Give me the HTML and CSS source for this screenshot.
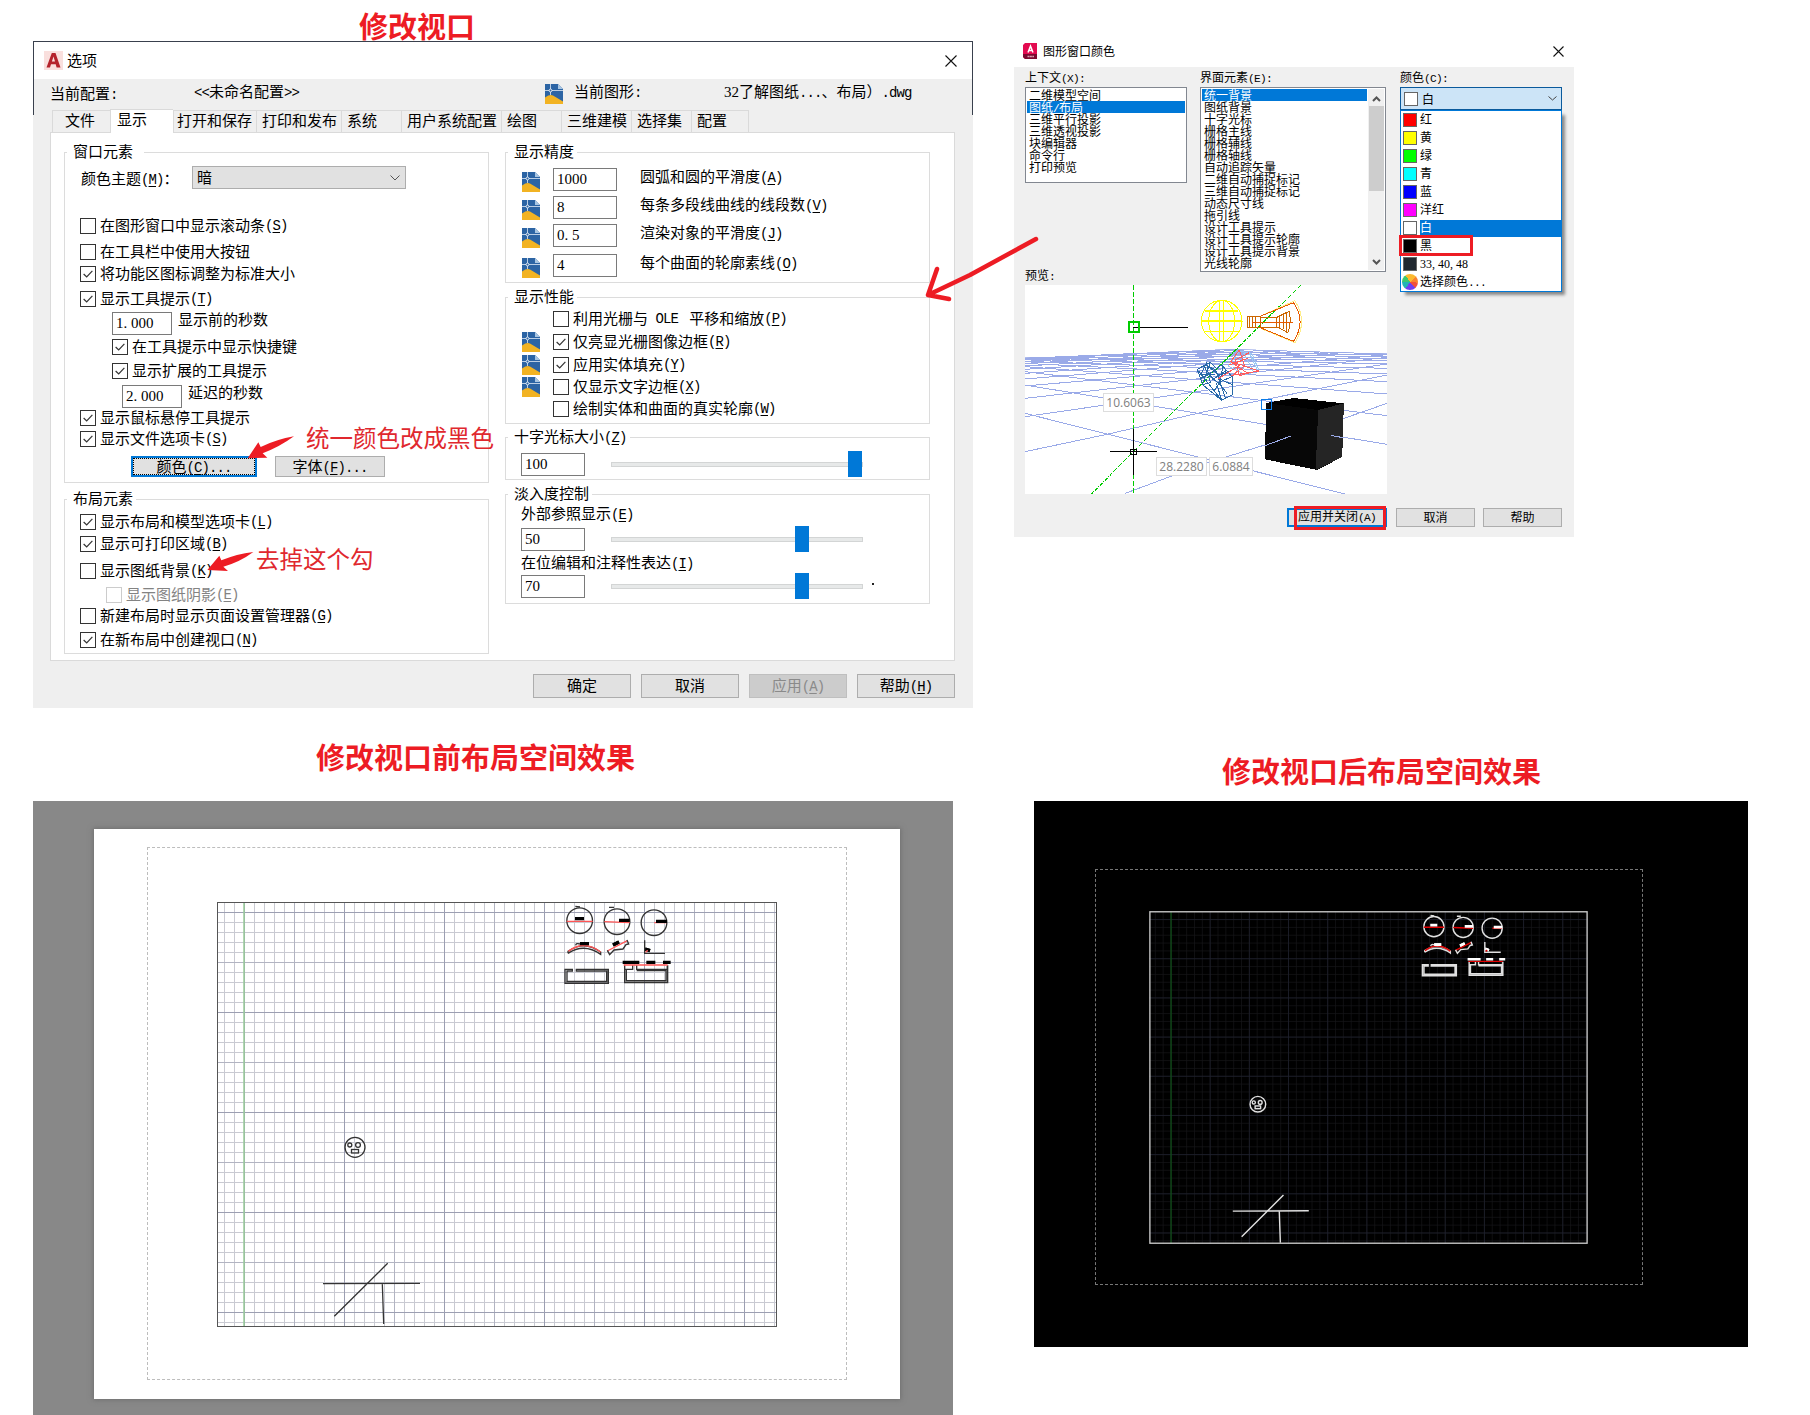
FILE: index.html
```html
<!DOCTYPE html>
<html lang="zh-CN">
<head>
<meta charset="utf-8">
<title>修改视口</title>
<link rel="stylesheet" href="styles.css">
</head>
<body>
<svg class="defs" width="0" height="0">
  <symbol id="dwg" viewBox="0 0 18 20">
    <path d="M0 0H13L18 5V20H0Z" fill="#2c64a4"/>
    <path d="M13 0L18 5H13Z" fill="#a9c6e2"/>
    <path d="M0 13.500Q5 10 8 11.500L18 17.500V20H0Z" fill="#f2b323"/>
    <path d="M5.500 0V11M0 6.500H18" stroke="#dfeaf5" stroke-width=".8" fill="none"/>
    <circle cx="5.500" cy="6.500" r="1.400" fill="#2c64a4" stroke="#fff" stroke-width=".8"/>
  </symbol>
  <symbol id="tick" viewBox="0 0 16 16"><path d="M3 8L6.500 11.300L13 4.500" fill="none" stroke="#333" stroke-width="1.400"/></symbol>
  <symbol id="drawing" viewBox="0 0 560 425">
    <g class="thick" transform="translate(323 -12) scale(.33333)" fill="none" stroke="currentColor">
      <circle cx="119" cy="92" r="38.500"/><circle cx="231" cy="95" r="38.500"/><circle cx="342" cy="98" r="38.500"/>
      <path d="M80 94H158M193 95L269 98M343 98H380" stroke="var(--red)"/>
      <g class="ink"><path d="M105 86H132M237 91H269M348 94H381M120 161H147M219 165L237 156M315 177L330 182"/></g>
      <path d="M106 49L120 51M207 52H222"/>
      <path d="M84 190V184Q132 150 182 186V193Q132 158 84 190M107 166Q108 158 120 162"/>
      <path d="M85 184Q132 148 182 186M202 183L262 152" stroke="var(--red)"/>
      <g class="ink"><path d="M120 161H147M219 165L237 156M315 177L330 182"/></g>
      <path d="M202 181L209 194L222 180L249 177L258 164L266 162L261 150M314 151V190H375"/>
      <path d="M317 187L323 181" stroke="var(--red)"/>
      <path d="M97 238H75V280H205V238H109V243H200V274H81V243H97Z"/>
      <path d="M78 277H203V240" stroke-width="5" opacity=".5"/>
      <path d="M254 226V278H383V226M259 240V272H378V240M254 238H278V226M290 226V238H383M290 242H378"/>
      <path d="M256 275H381V228" stroke-width="5" opacity=".5"/>
      <path d="M251 225H383" stroke="var(--red)"/>
      <g class="ink"><path d="M248 217H298M319 217H346M369 217H392"/></g>
    </g>
    <g class="lines" fill="none" stroke="currentColor">
      <circle cx="138" cy="245.300" r="10"/><circle cx="132.800" cy="243" r="2"/><circle cx="141" cy="243" r="2.400"/><rect x="134.500" y="247.500" width="7" height="3.500"/>
      <path d="M106 381.700L203 381.300M170.700 361.300L117.300 414.300M165.300 381.300L166.700 422"/>
    </g>
  </symbol>
</svg>

<main class="board">
  <h1 class="note-title t1">修改视口</h1>
  <h2 class="note-title t2">修改视口前布局空间效果</h2>
  <h2 class="note-title t3">修改视口后布局空间效果</h2>

  <section class="options">
    <header class="titlebar">
      <svg class="app" width="19" height="19" viewBox="0 0 19 19"><rect width="19" height="19" fill="#f9dfdd"/><path d="M2.500 16.500L7.800 2H11.500L16.500 16.500H12.600L11.700 13.300H7L6 16.500ZM7.900 10.500H11L9.500 5.500Z" fill="#b5232c" fill-rule="evenodd"/></svg>
      <span>选项</span>
      <svg class="x" width="12" height="12" viewBox="0 0 12 12"><path d="M.5 .5L11.500 11.500M11.500 .5L.5 11.500" stroke="#111" stroke-width="1.100"/></svg>
    </header>
    <div class="profile">
      <span class="low">当前配置<span class="k">:</span></span>
      <span><span class="k">&lt;&lt;</span>未命名配置<span class="k">&gt;&gt;</span></span>
      <svg width="18" height="20"><use href="#dwg"/></svg>
      <span>当前图形<span class="k">:</span></span>
      <span>32了解图纸<span class="k">...</span>、布局）<span class="k">.dwg</span></span>
    </div>
    <nav class="tabs">
      <span>文件</span><span class="on">显示</span><span>打开和保存</span><span>打印和发布</span><span>系统</span><span>用户系统配置</span><span>绘图</span><span>三维建模</span><span>选择集</span><span>配置</span>
    </nav>
    <div class="panel">
      <div class="col">
        <div class="group g-window">
          <div class="legend wide">窗口元素</div>
          <div class="rows">
            <div class="theme"><span>颜色主题<span class="k">(<u>M</u>)</span>：</span><div class="select">暗<svg width="10" height="6" viewBox="0 0 10 6"><path d="M.5 .5L5 5L9.500 .5" fill="none" stroke="#555"/></svg></div></div>
            <label class="cb"><i></i>在图形窗口中显示滚动条<span class="k">(<u>S</u>)</span></label>
            <label class="cb"><i></i>在工具栏中使用大按钮</label>
            <label class="cb"><i><svg><use href="#tick"/></svg></i>将功能区图标调整为标准大小</label>
            <label class="cb"><i><svg><use href="#tick"/></svg></i>显示工具提示<span class="k">(<u>T</u>)</span></label>
            <div class="time in1"><b class="input">1<span class="dot">.</span>000</b><span>显示前的秒数</span></div>
            <label class="cb in1"><i><svg><use href="#tick"/></svg></i>在工具提示中显示快捷键</label>
            <label class="cb in1"><i><svg><use href="#tick"/></svg></i>显示扩展的工具提示</label>
            <div class="time in2"><b class="input">2<span class="dot">.</span>000</b><span>延迟的秒数</span></div>
            <label class="cb"><i><svg><use href="#tick"/></svg></i>显示鼠标悬停工具提示</label>
            <label class="cb"><i><svg><use href="#tick"/></svg></i>显示文件选项卡<span class="k">(<u>S</u>)</span></label>
            <div class="pair"><button class="btn focus">颜色<span class="k">(<u>C</u>)...</span></button><button class="btn">字体<span class="k">(<u>F</u>)...</span></button></div>
          </div>
        </div>
        <div class="group g-layout">
          <div class="legend">布局元素</div>
          <div class="rows">
            <label class="cb"><i><svg><use href="#tick"/></svg></i>显示布局和模型选项卡<span class="k">(<u>L</u>)</span></label>
            <label class="cb"><i><svg><use href="#tick"/></svg></i>显示可打印区域<span class="k">(<u>B</u>)</span></label>
            <label class="cb"><i></i>显示图纸背景<span class="k">(<u>K</u>)</span></label>
            <label class="cb off"><i></i>显示图纸阴影<span class="k">(<u>E</u>)</span></label>
            <label class="cb"><i></i>新建布局时显示页面设置管理器<span class="k">(<u>G</u>)</span></label>
            <label class="cb"><i><svg><use href="#tick"/></svg></i>在新布局中创建视口<span class="k">(<u>N</u>)</span></label>
          </div>
        </div>
      </div>
      <div class="col">
        <div class="group g-precision">
          <div class="legend">显示精度</div>
          <div class="rows">
            <div class="prec"><svg width="18" height="20"><use href="#dwg"/></svg><b class="input">1000</b><span>圆弧和圆的平滑度<span class="k">(<u>A</u>)</span></span></div>
            <div class="prec"><svg width="18" height="20"><use href="#dwg"/></svg><b class="input">8</b><span>每条多段线曲线的线段数<span class="k">(<u>V</u>)</span></span></div>
            <div class="prec"><svg width="18" height="20"><use href="#dwg"/></svg><b class="input">0<span class="dot">.</span>5</b><span>渲染对象的平滑度<span class="k">(<u>J</u>)</span></span></div>
            <div class="prec"><svg width="18" height="20"><use href="#dwg"/></svg><b class="input">4</b><span>每个曲面的轮廓素线<span class="k">(<u>O</u>)</span></span></div>
          </div>
        </div>
        <div class="group g-perf">
          <div class="legend">显示性能</div>
          <div class="rows">
            <label class="cb"><em></em><i></i>利用光栅与<span class="k">&nbsp;OLE&nbsp;</span>&nbsp;平移和缩放<span class="k">(<u>P</u>)</span></label>
            <label class="cb"><em><svg width="18" height="20"><use href="#dwg"/></svg></em><i><svg><use href="#tick"/></svg></i>仅亮显光栅图像边框<span class="k">(<u>R</u>)</span></label>
            <label class="cb"><em><svg width="18" height="20"><use href="#dwg"/></svg></em><i><svg><use href="#tick"/></svg></i>应用实体填充<span class="k">(<u>Y</u>)</span></label>
            <label class="cb"><em><svg width="18" height="20"><use href="#dwg"/></svg></em><i></i>仅显示文字边框<span class="k">(<u>X</u>)</span></label>
            <label class="cb"><em></em><i></i>绘制实体和曲面的真实轮廓<span class="k">(<u>W</u>)</span></label>
          </div>
        </div>
        <div class="group g-cross">
          <div class="legend">十字光标大小<span class="k">(<u>Z</u>)</span></div>
          <div class="slide"><b class="input">100</b><div class="track"><i class="full"></i></div></div>
        </div>
        <div class="group g-fade">
          <div class="legend">淡入度控制</div>
          <div class="rows">
            <span class="cap">外部参照显示<span class="k">(<u>E</u>)</span></span>
            <div class="slide"><b class="input">50</b><div class="track"><i></i></div></div>
            <span class="cap">在位编辑和注释性表达<span class="k">(<u>I</u>)</span></span>
            <div class="slide"><b class="input">70</b><div class="track"><i></i></div><s></s></div>
          </div>
        </div>
      </div>
    </div>
    <footer class="foot"><button class="btn">确定</button><button class="btn">取消</button><button class="btn dis">应用<span class="k">(<u>A</u>)</span></button><button class="btn">帮助<span class="k">(<u>H</u>)</span></button></footer>
  </section>

  <section class="colors">
    <header class="titlebar">
      <svg class="app" width="15" height="16" viewBox="0 0 15 16"><path d="M0 2L2 0H14V16H2L0 14Z" fill="#e30b50"/><path d="M0 11H14V16H2L0 14Z" fill="#7d0a30"/><path d="M5 9.500L7.500 3L10 9.500M6 7.500H9" stroke="#fff" stroke-width="1.500" fill="none"/><path d="M4.500 13.500H11" stroke="#d9a0b2" stroke-width="1.500" stroke-dasharray="2 .4"/></svg>
      <span>图形窗口颜色</span>
      <svg class="x" width="11" height="11" viewBox="0 0 11 11"><path d="M.5 .5L10.500 10.500M10.500 .5L.5 10.500" stroke="#111" stroke-width="1.100"/></svg>
    </header>
    <div class="top">
      <div class="field">
        <span class="lab">上下文<span class="k">(X):</span></span>
        <ul class="list ctx"><li>二维模型空间</li><li class="sel">图纸<span class="k">/</span>布局</li><li>三维平行投影</li><li>三维透视投影</li><li>块编辑器</li><li>命令行</li><li>打印预览</li></ul>
        <span class="lab prev">预览<span class="k">:</span></span>
      </div>
      <div class="field">
        <span class="lab">界面元素<span class="k">(E):</span></span>
        <div class="list elem">
          <ul><li class="sel">统一背景</li><li>图纸背景</li><li>十字光标</li><li>栅格主线</li><li>栅格辅线</li><li>栅格轴线</li><li>自动追踪矢量</li><li>二维自动捕捉标记</li><li>三维自动捕捉标记</li><li>动态尺寸线</li><li>拖引线</li><li>设计工具提示</li><li>设计工具提示轮廓</li><li>设计工具提示背景</li><li>光线轮廓</li></ul>
          <div class="bar"><svg width="9" height="6" viewBox="0 0 9 6"><path d="M1 5L4.500 1.500L8 5" fill="none" stroke="#555" stroke-width="2"/></svg><i></i><svg class="dn" width="9" height="6" viewBox="0 0 9 6"><path d="M1 1L4.500 4.500L8 1" fill="none" stroke="#555" stroke-width="2"/></svg></div>
        </div>
      </div>
      <div class="field">
        <span class="lab">颜色<span class="k">(C):</span></span>
        <div class="combo"><i class="sw white"></i><span>白</span><svg width="9" height="5" viewBox="0 0 9 5"><path d="M.5 .5L4.500 4L8.500 .5" fill="none" stroke="#444"/></svg></div>
        <ul class="drop">
          <li><i class="sw red"></i><span>红</span></li><li><i class="sw yellow"></i><span>黄</span></li><li><i class="sw green"></i><span>绿</span></li><li><i class="sw cyan"></i><span>青</span></li><li><i class="sw blue"></i><span>蓝</span></li><li><i class="sw magenta"></i><span>洋红</span></li><li class="sel"><i class="sw white"></i><span>白</span></li><li><i class="sw black"></i><span>黑</span></li><li><i class="sw slate"></i><span>33<b>,</b>40<b>,</b>48</span></li><li><i class="wheel"></i><span>选择颜色<span class="k">...</span></span></li>
        </ul>
      </div>
    </div>
    <div class="preview">
      <svg width="362" height="209" viewBox="54 45 979 627" preserveAspectRatio="none">
        <defs><clipPath id="ground"><path d="M54 262L610 236L1033 250V672H54Z"/></clipPath></defs>
        <g clip-path="url(#ground)" class="mesh">
          <path d="M54 430L1033 704M54 345L1033 523M54 305L1033 437M54 290L1033 372M54 280L1033 335M54 274L1033 312M54 268L1033 295M54 265L1033 281M54 262L1033 272M200 256L1033 266M320 250L1033 260M440 244L1033 255"/>
          <path d="M325 670L548 578L775 500L1033 400M54 545L280 492L540 425L1033 315M54 440L1033 282M54 385L1033 262M54 348L1033 254M54 327L900 250M54 310L850 248M54 298L800 244M54 288L760 242M54 280L720 240M54 274L680 238M54 268L640 237M54 265L610 238L1033 252"/>
        </g>
        <g fill="none" class="wire">
          <path d="M347 45V672" stroke="#0c0" stroke-dasharray="5 2"/>
          <path d="M800 45L347 545L234 672" stroke="#0c0" stroke-dasharray="4 1 1 1"/>
          <path d="M347 172H495M284 544H411M347 477V614" stroke="#000"/>
          <path d="M340 537H355V552H340Z" stroke="#000"/>
          <path d="M335 156H362V187H335Z" stroke="#0c0" stroke-width="2"/>
          <g stroke="#ff0"><ellipse cx="586" cy="153" rx="55" ry="62"/><ellipse cx="586" cy="153" rx="35" ry="62"/><path d="M580 91V215M591 91V215M531 152H641M538 184H634" /><path d="M542 122H630M531 153H641" stroke-width="2"/></g>
          <path d="M693 137L784 92Q820 155 784 218L693 176" stroke="#fe8"/>
          <g stroke="#e85a00"><path d="M656 139H690V173H656Z M662 139V173M670 139V173M678 139V173M690 142H735V171H690M735 142L768 124Q776 155 765 188L735 171V142M741 140V175M752 134V178M760 128V184" stroke="#c60"/><path d="M690 139L780 98Q816 155 780 214L690 173M668 157H780"/></g>
          <g stroke="#2769a8"><path d="M520 298L555 277L572 295L586 285L614 320L616 374L586 391L534 344ZM524 304L586 391M555 277L534 344M540 283L570 300L596 385M530 325L570 300M526 312L568 312M550 290L580 315L610 304M550 312L586 350M567 360L585 329L616 345M590 287L580 340L600 370M545 280L528 315L550 312ZM534 344L556 338L540 290M586 391L572 340L614 320M560 330L600 300"/></g>
          <path d="M634 243L668 252L686 300L650 315L604 288ZM660 248L685 304M645 248L672 306" stroke="#9ccbf4"/>
          <path d="M634 240L610 275L656 310L634 317L623 270L660 248M610 275L640 285L686 303L615 316L648 287L634 240M577 326L640 282M605 285L658 265" stroke="#ff5c5c"/>
        </g>
        <path d="M706 399L780 384L916 400L914 520L910 562L844 600L703 568Z" fill="#070707"/><path d="M706 399L780 384L916 400L847 420Z" fill="#000"/><path d="M847 420L916 400L914 520L910 562L840 600Z" fill="#252525"/>
        <g class="mesh"><path d="M703 527L773 498M881 496L914 503"/></g>
        <path d="M693 389H721V418H693Z" fill="none" stroke="#0a7be8"/>
      </svg>
      <span class="dim d1">10.6063</span><span class="dim d2">28.2280</span><span class="dim d3">6.0884</span>
    </div>
    <footer class="foot"><button class="btn primary">应用并关闭<span class="k">(A)</span></button><button class="btn">取消</button><button class="btn">帮助</button></footer>
  </section>

  <section class="space before">
    <div class="paper"><div class="margin">
      <svg class="viewport" width="560" height="425" viewBox="0 0 560 425">
        <defs>
          <pattern id="minor" x="-3" y="0" width="10" height="10" patternUnits="userSpaceOnUse"><path d="M.5 0V10M0 .5H10" class="gl"/></pattern>
          <pattern id="mid" x="27" y="10" width="50" height="50" patternUnits="userSpaceOnUse"><path d="M.5 0V50M0 .5H50" class="gm"/></pattern>
          <pattern id="major" x="27" y="10" width="100" height="100" patternUnits="userSpaceOnUse"><path d="M.5 0V100M0 .5H100" class="gh"/></pattern>
        </defs>
        <rect width="560" height="425" fill="url(#minor)"/><rect width="560" height="425" fill="url(#mid)"/><rect width="560" height="425" fill="url(#major)"/>
        <path d="M27 0V425" class="axis"/>
        <use href="#drawing" width="560" height="425"/>
        <rect x=".5" y=".5" width="559" height="424" class="edge"/>
      </svg>
    </div></div>
  </section>

  <section class="space after">
    <div class="margin">
      <svg class="viewport" width="439" height="333" viewBox="0 0 560 425">
        <defs>
          <pattern id="minor2" x="-2.700" y="0.300" width="10" height="10" patternUnits="userSpaceOnUse"><path d="M.5 0V10M0 .5H10" class="gl"/></pattern>
          <pattern id="mid2" x="27.300" y="10.300" width="50" height="50" patternUnits="userSpaceOnUse"><path d="M.5 0V50M0 .5H50" class="gm"/></pattern>
        </defs>
        <rect width="560" height="425" fill="url(#minor2)"/><rect width="560" height="425" fill="url(#mid2)"/>
        <path d="M28 0V425" class="axis"/>
        <use href="#drawing" x=".8" y="1.300" width="560" height="425"/>
        <rect x="1" y="1" width="558" height="423" class="edge"/>
      </svg>
    </div>
  </section>

  <span class="note n1">统一颜色改成黑色</span>
  <span class="note n2">去掉这个勾</span>
  <span class="mark m1"></span>
  <span class="mark m2"></span>
  <svg class="arrows" width="1810" height="1415" viewBox="0 0 1810 1415">
    <g fill="#ed1c24" transform="translate(20 350) scale(.33333)"><path d="M683 325L715 277L722 291Q770 268 822 259Q780 290 728 310L742 323Z"/><path d="M562 660L598 617L604 631Q650 612 700 606Q660 636 610 650L624 663Z"/></g>
    <path d="M1036 239L970 275Q945 287 928 295L937 269M928 295L949 299" fill="none" stroke="#ed1c24" stroke-width="4.500" stroke-linecap="round" stroke-linejoin="round"/>
  </svg>
</main>
</body>
</html>
```
FILE: styles.css
```css
*{box-sizing:border-box}
body{margin:0;background:#fff;font-family:"Liberation Serif","Noto Sans CJK SC",sans-serif;font-size:15px;color:#000}
ul{list-style:none;margin:0;padding:0}
.defs{position:absolute}
svg{display:block;flex:none}
.board{position:relative;width:1810px;height:1415px;overflow:hidden;white-space:nowrap}
.k{font-family:"Liberation Mono",monospace;font-size:.9333em;letter-spacing:-.0643em;line-height:1}
u{text-underline-offset:2px}

/* hand-written notes */
.note-title{position:absolute;margin:0;font:bold 29px/34px "Noto Sans CJK SC",sans-serif;color:#ed1c24}
.t1{left:359px;top:8px}
.t2{left:316px;top:739px}
.t3{left:1222px;top:753px}
.note{position:absolute;font:23.5px/30px "Noto Sans CJK SC",sans-serif;color:#e0282e}
.n1{left:306px;top:422px}
.n2{left:256px;top:543px}
.mark{position:absolute;border:3px solid #ed1c24}
.m1{left:1399px;top:235px;width:74px;height:21px}
.m2{left:1294px;top:506px;width:92px;height:24px}
.arrows{position:absolute;left:0;top:0}

/* options dialog */
.options{position:absolute;left:33px;top:41px;width:940px;height:667px;background:linear-gradient(#39404d,#39404d) left top/1px 73px no-repeat,linear-gradient(#39404d,#39404d) right top/1px 73px no-repeat,#efefef;padding:0 1px;border-top:1px solid #39404d}
.titlebar{display:flex;align-items:center;background:#fff}
.titlebar .x{margin-left:auto}
.options .titlebar{height:37px;padding:0 15px 0 10px}
.options .titlebar span{margin:-2px 0 0 4px}
.options .titlebar .x{margin-top:1px}
.profile{display:grid;grid-template-columns:144px 351px 29px 150px auto;height:30px;padding:0 0 0 16px;line-height:26px}
.profile .low{padding-top:2px}
.profile svg{margin-top:5px}
.tabs{display:grid;grid-template-columns:58px 63px 83px 85px 60px 100px 60px 70px 60px 58px;height:23px;padding-left:18px;align-items:end}
.tabs span{height:22px;line-height:21px;border:1px solid #dadada;border-width:1px 0 0 1px;padding-left:5px}
.tabs span:first-child{padding-left:12px}
.tabs span:last-child{border-right-width:1px}
.tabs .on{background:#fff;height:24px;padding-left:6px;margin-bottom:-1px;z-index:1}
.tabs .on+span{padding-left:3px}
.panel{width:905px;height:529px;margin-left:16px;border:1px solid #dadada;background:#fff;display:flex;gap:16px;padding:19px 0 0 13px}
.col{width:425px;display:flex;flex-direction:column}
.group{border:1px solid #dcdcdc}
.legend{width:max-content;height:16px;line-height:16px;margin:-9px 0 0 2px;padding:0 3px 0 6px;background:#fff}
.legend.wide{padding-right:11px}
.rows{display:grid;align-items:start}
.g-window{height:331px}
.g-window .rows{padding:6px 0 0 15px;grid-template-rows:50px 26px 22px 25px 23px 25px 24px 24px 23px 21px 27px 21px}
.g-layout{height:155px;margin-top:16px}
.g-layout .rows{padding:5px 0 0 15px;grid-template-rows:22px 27px 24px 21px 24px 20px}
.g-precision{height:131px}
.g-precision .rows{padding:8px 0 0 16px;grid-template-rows:28px 28px 30px 23px}
.g-perf{height:127px;margin-top:14px}
.g-perf .rows{padding:4px 0 0 16px;grid-template-rows:23px 23px 22px 22px 20px}
.g-cross{height:43px;margin-top:13px}
.g-cross .slide{margin:6px 0 0 15px}
.g-fade{height:110px;margin-top:14px}
.g-fade .rows{padding:2px 0 0 15px;grid-template-rows:22px 27px 20px 26px}
.cap{line-height:20px}
.theme{display:grid;grid-template-columns:112px 214px;line-height:26px}
.theme>span{padding-left:1px}
.select{display:flex;justify-content:space-between;align-items:center;height:23px;padding:0 5px 0 4px;background:#e1e1e1;border:1px solid #adadad;line-height:20px}
.cb{display:flex;align-items:center;height:20px;line-height:18px;padding-bottom:1px}
.cb>i{width:16px;height:16px;border:1px solid #333;background:#fff;margin:1px 4px 0 0}
.cb>i svg{width:14px;height:14px}
.cb>em{width:31px}
.in1{margin-left:32px}
.in2{margin-left:42px}
.off{margin-left:26px;color:#838383}
.off>i{border-color:#ccc}
.input{display:block;width:64px;height:23px;border:1px solid #7a7a7a;background:#fff;font-weight:normal;line-height:21px;padding-left:3px}
.dot{letter-spacing:3.7px}
.time{display:flex}
.time .input{width:60px}
.time>span{line-height:16px;margin-left:6px}
.prec{display:grid;grid-template-columns:31px 87px auto}
.prec svg{margin-top:4px}
.prec>span{line-height:18px}
.slide{display:flex;align-items:center;height:26px}
.track{position:relative;width:252px;height:5px;margin-left:26px;background:#e7e9e9;border:1px solid #d3d5d5}
.track i{position:absolute;left:183px;top:-12px;width:14px;height:26px;background:#0078d7}
.track i.full{left:236px}
.slide s{width:2px;height:2px;background:#222;margin:-4px 0 0 9px}
.btn{font:inherit;color:inherit;background:#e1e1e1;border:1px solid #adadad;padding:0;display:block;text-align:center}
.pair{display:flex;gap:18px;padding-left:51px}
.pair .btn{width:110px;height:21px;line-height:18px}
.pair .focus{width:126px;border:2px solid #0078d7;outline:1px dotted #000;outline-offset:-3px;line-height:16px}
.options .foot{display:flex;gap:10px;padding:13px 0 0 499px}
.options .foot .btn{width:98px;height:24px;line-height:20px;padding-bottom:1px}
.foot .dis{background:#ccc;border-color:#bfbfbf;color:#8a8a8a}

/* drawing window colours dialog */
.colors{position:absolute;left:1014px;top:35px;width:560px;height:502px;background:#f0f0f0;font-size:12px}
.colors .titlebar{height:32px;padding:0 10px 0 9px}
.colors .titlebar span{margin-left:5px}
.top{display:grid;grid-template-columns:175px 200px 162px;padding-left:11px;height:218px;align-items:start}
.lab{display:block;height:20px;line-height:22px}
.prev{margin-top:82px}
.list{border:1px solid #828790;background:#fff;padding:1px}
.list li{height:12px;line-height:15px;padding-left:2px}
.list .sel{background:#0078d7;color:#fff}
.ctx{width:162px;height:96px}
.elem{width:186px;height:185px;display:flex;gap:1px}
.elem ul{flex:none;width:165px}
.bar{width:16px;background:#f0f0f0;display:flex;flex-direction:column;align-items:center;padding-top:7px}
.bar i{width:15px;height:85px;background:#cdcdcd;margin-top:4px}
.bar .dn{margin:auto 0 5px}
.combo{display:flex;align-items:center;height:23px;border:1px solid #0a5a9c;background:#cce4f7;padding:0 4px 0 3px}
.combo svg{margin-left:auto}
.combo span{margin-left:4px}
.sw{width:14px;height:14px;border:1px solid #666;flex:none}
.white{background:#fff}.red{background:#f00}.yellow{background:#ff0}.green{background:#0f0}.cyan{background:#0ff}.blue{background:#00f}.magenta{background:#f0f}.black{background:#000}.slate{background:#212830}
.drop{position:relative;height:182px;border:1px solid #0078d7;background:#fff;box-shadow:4px 4px 3px -1px #888}
.drop li{display:flex;align-items:center;height:18px;padding-left:2px}
.drop li>span{flex:1;height:17px;line-height:16px;margin-left:3px}
.drop li b{font-weight:normal;letter-spacing:3px}
.drop .sel span{background:#0078d7;color:#fff}
.drop .wheel{width:16px;height:16px;border-radius:50%;margin:0 -1px 0 -1px;background:conic-gradient(#fbb92f 0 45deg,#fa8230 45deg 95deg,#f0503c 95deg 140deg,#7040f0 140deg 215deg,#22b4b4 215deg 270deg,#3cc870 270deg 325deg,#fbb92f 325deg)}
.preview{position:relative;width:362px;height:209px;margin-left:11px;background:#fff;overflow:hidden}
.preview svg{shape-rendering:crispEdges}
.preview path,.preview ellipse{vector-effect:non-scaling-stroke}
.mesh{fill:none;stroke:#9aaae8}
.dim{position:absolute;height:19px;border:1px solid #ddd;background:#fff;font:12px/17px "Open Sans","Noto Sans",sans-serif;color:#808080;text-align:center}
.d1{left:78px;top:108px;width:51px}
.d2{left:131px;top:172px;width:51px}
.d3{left:184px;top:172px;width:44px}
.colors .foot{display:flex;padding:14px 0 0 273px;gap:8px}
.colors .foot .btn{width:79px;height:19px;line-height:16px}
.colors .foot .primary{width:100px;border:2px solid #0078d7;line-height:14px;margin-right:1px}

/* layout space pictures */
.space{position:absolute;top:801px}
.before{--ink:#000;--red:#f55;--w:4px;--lw:1.3px;left:33px;width:920px;height:614px;background:#888;color:#333;padding:28px 53px 0 61px}
.paper{height:570px;background:#fff;box-shadow:0 0 5px 1px #707070;padding:18px 53px 19px}
.margin{border:1px dashed #bdbdbd}
.paper .margin{height:533px;padding:54px 0 0 69px}
.thick{stroke-width:var(--w)}
.ink{stroke:var(--ink);stroke-width:10px}
.lines{stroke-width:var(--lw)}
.before .viewport{color:#333}
.gl,.gm,.gh,.axis,.edge{fill:none}
.before .gl{stroke:#c9cad2}
.before .gm{stroke:#b2b4c2}
.before .gh{stroke:#9c9fb2}
.before .axis{stroke:#9c9;stroke-width:1.5px}
.before .edge{stroke:#555}
.after{--ink:#fff;--red:#e00000;--w:5.5px;--lw:1.8px;left:1034px;width:714px;height:546px;background:#000;padding:68px 105px 61px 61px}
.after .margin{height:416px;border-color:#777;padding:41px 0 0 53px}
.after .viewport{color:#e0e0e0}
.after .gl{stroke:#141417}
.after .gm{stroke:#1e2130}
.after .axis{stroke:#0c5a12;stroke-width:1.3px}
.after .edge{stroke:#ccc;stroke-width:1.7px}
```
